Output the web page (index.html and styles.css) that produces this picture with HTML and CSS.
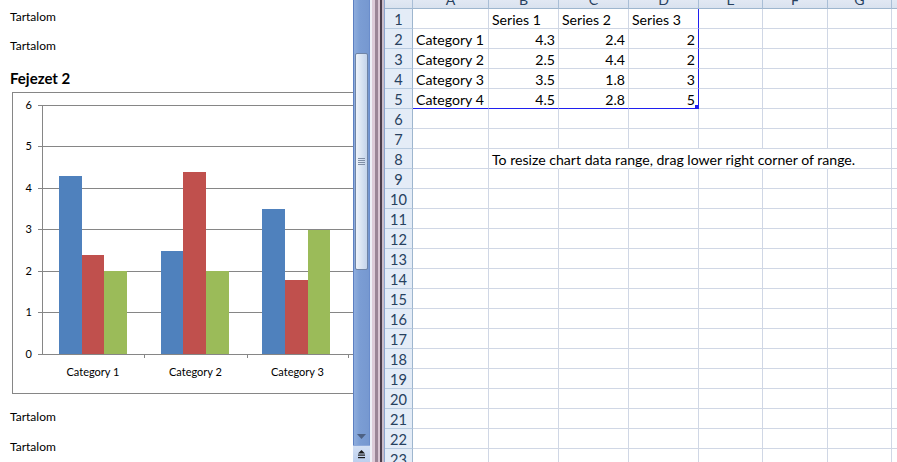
FILE: index.html
```html
<!DOCTYPE html>
<html>
<head>
<meta charset="utf-8">
<link rel="stylesheet" href="styles.css">
</head>
<body>
<div class="app">
  <div class="doc">
    <p class="para">Tartalom</p>
    <p class="para p2">Tartalom</p>
    <h2 class="heading">Fejezet 2</h2>
    <div class="chart">
      <svg class="chart-svg" width="358" height="300" viewBox="13 93 358 300" xmlns="http://www.w3.org/2000/svg">
        <g stroke="#868686" stroke-width="1" shape-rendering="crispEdges">
          <line x1="38" y1="105.5" x2="372" y2="105.5"/>
          <line x1="38" y1="146.5" x2="372" y2="146.5"/>
          <line x1="38" y1="188.5" x2="372" y2="188.5"/>
          <line x1="38" y1="229.5" x2="372" y2="229.5"/>
          <line x1="38" y1="271.5" x2="372" y2="271.5"/>
          <line x1="38" y1="312.5" x2="372" y2="312.5"/>
        </g>
        <g shape-rendering="crispEdges">
          <rect x="59" y="175.5" width="23" height="179" fill="#4f81bd"/>
          <rect x="82" y="254.5" width="22" height="100" fill="#c0504d"/>
          <rect x="104" y="271" width="23" height="83.5" fill="#9bbb59"/>
          <rect x="161" y="250.5" width="22" height="104" fill="#4f81bd"/>
          <rect x="183" y="171.5" width="23" height="183" fill="#c0504d"/>
          <rect x="206" y="271" width="23" height="83.5" fill="#9bbb59"/>
          <rect x="262" y="208.5" width="23" height="146" fill="#4f81bd"/>
          <rect x="285" y="279.5" width="23" height="75" fill="#c0504d"/>
          <rect x="308" y="229.5" width="22" height="125" fill="#9bbb59"/>
        </g>
        <g stroke="#868686" stroke-width="1" shape-rendering="crispEdges">
          <line x1="42.5" y1="105" x2="42.5" y2="355"/>
          <line x1="38" y1="354.5" x2="372" y2="354.5"/>
          <line x1="144.5" y1="354" x2="144.5" y2="358"/>
          <line x1="247.5" y1="354" x2="247.5" y2="358"/>
          <line x1="348.5" y1="354" x2="348.5" y2="358"/>
        </g>
        <g class="axis-text" text-anchor="end">
          <text x="32" y="109">6</text>
          <text x="32" y="150">5</text>
          <text x="32" y="192">4</text>
          <text x="32" y="233">3</text>
          <text x="32" y="275">2</text>
          <text x="32" y="316">1</text>
          <text x="32" y="358">0</text>
        </g>
        <g class="axis-text" text-anchor="middle">
          <text x="93" y="376">Category 1</text>
          <text x="195.5" y="376">Category 2</text>
          <text x="297.5" y="376">Category 3</text>
        </g>
      </svg>
    </div>
    <p class="para p3">Tartalom</p>
    <p class="para p4">Tartalom</p>
  </div>

  <div class="vscroll">
    <div class="track-top"></div>
    <div class="thumb"><span class="grip"></span></div>
    <div class="track-rest"></div>
    <div class="arrow-btn">
      <svg width="9" height="5" viewBox="0 0 9 5"><polygon points="0,0 9,0 4.5,5" fill="#4d6184"/></svg>
    </div>
    <div class="browse-btn">
      <svg width="9" height="9" viewBox="0 0 9 9"><polygon points="4.5,0 8,3.5 1,3.5" fill="#1a1a1a"/><rect x="1" y="4.5" width="7" height="1.2" fill="#1a1a1a"/><rect x="1" y="7" width="7" height="1.2" fill="#1a1a1a"/></svg>
    </div>
  </div>

  <div class="splitter"></div>

  <div class="sheet">
    <div class="grid">
      <div class="corner"></div><div class="ch">A</div><div class="ch">B</div><div class="ch">C</div><div class="ch">D</div><div class="ch">E</div><div class="ch">F</div><div class="ch">G</div><div class="ch">H</div>
      <div class="rh">1</div><div class="c"></div><div class="c">Series 1</div><div class="c">Series 2</div><div class="c rb">Series 3</div><div class="c"></div><div class="c"></div><div class="c"></div><div class="c"></div>
      <div class="rh">2</div><div class="c">Category 1</div><div class="c n">4.3</div><div class="c n">2.4</div><div class="c n rb">2</div><div class="c"></div><div class="c"></div><div class="c"></div><div class="c"></div>
      <div class="rh">3</div><div class="c">Category 2</div><div class="c n">2.5</div><div class="c n">4.4</div><div class="c n rb">2</div><div class="c"></div><div class="c"></div><div class="c"></div><div class="c"></div>
      <div class="rh">4</div><div class="c">Category 3</div><div class="c n">3.5</div><div class="c n">1.8</div><div class="c n rb">3</div><div class="c"></div><div class="c"></div><div class="c"></div><div class="c"></div>
      <div class="rh">5</div><div class="c bb">Category 4</div><div class="c n bb">4.5</div><div class="c n bb">2.8</div><div class="c n rb bb handle-cell">5<span class="handle"></span></div><div class="c"></div><div class="c"></div><div class="c"></div><div class="c"></div>
      <div class="rh">6</div><div class="c"></div><div class="c"></div><div class="c"></div><div class="c"></div><div class="c"></div><div class="c"></div><div class="c"></div><div class="c"></div>
      <div class="rh">7</div><div class="c"></div><div class="c"></div><div class="c"></div><div class="c"></div><div class="c"></div><div class="c"></div><div class="c"></div><div class="c"></div>
      <div class="rh">8</div><div class="c"></div><div class="c ov note">To resize chart data range, drag lower right corner of range.</div><div class="c ov"></div><div class="c ov"></div><div class="c ov"></div><div class="c ov"></div><div class="c"></div><div class="c"></div>
      <div class="rh">9</div><div class="c"></div><div class="c"></div><div class="c"></div><div class="c"></div><div class="c"></div><div class="c"></div><div class="c"></div><div class="c"></div>
      <div class="rh">10</div><div class="c"></div><div class="c"></div><div class="c"></div><div class="c"></div><div class="c"></div><div class="c"></div><div class="c"></div><div class="c"></div>
      <div class="rh">11</div><div class="c"></div><div class="c"></div><div class="c"></div><div class="c"></div><div class="c"></div><div class="c"></div><div class="c"></div><div class="c"></div>
      <div class="rh">12</div><div class="c"></div><div class="c"></div><div class="c"></div><div class="c"></div><div class="c"></div><div class="c"></div><div class="c"></div><div class="c"></div>
      <div class="rh">13</div><div class="c"></div><div class="c"></div><div class="c"></div><div class="c"></div><div class="c"></div><div class="c"></div><div class="c"></div><div class="c"></div>
      <div class="rh">14</div><div class="c"></div><div class="c"></div><div class="c"></div><div class="c"></div><div class="c"></div><div class="c"></div><div class="c"></div><div class="c"></div>
      <div class="rh">15</div><div class="c"></div><div class="c"></div><div class="c"></div><div class="c"></div><div class="c"></div><div class="c"></div><div class="c"></div><div class="c"></div>
      <div class="rh">16</div><div class="c"></div><div class="c"></div><div class="c"></div><div class="c"></div><div class="c"></div><div class="c"></div><div class="c"></div><div class="c"></div>
      <div class="rh">17</div><div class="c"></div><div class="c"></div><div class="c"></div><div class="c"></div><div class="c"></div><div class="c"></div><div class="c"></div><div class="c"></div>
      <div class="rh">18</div><div class="c"></div><div class="c"></div><div class="c"></div><div class="c"></div><div class="c"></div><div class="c"></div><div class="c"></div><div class="c"></div>
      <div class="rh">19</div><div class="c"></div><div class="c"></div><div class="c"></div><div class="c"></div><div class="c"></div><div class="c"></div><div class="c"></div><div class="c"></div>
      <div class="rh">20</div><div class="c"></div><div class="c"></div><div class="c"></div><div class="c"></div><div class="c"></div><div class="c"></div><div class="c"></div><div class="c"></div>
      <div class="rh">21</div><div class="c"></div><div class="c"></div><div class="c"></div><div class="c"></div><div class="c"></div><div class="c"></div><div class="c"></div><div class="c"></div>
      <div class="rh">22</div><div class="c"></div><div class="c"></div><div class="c"></div><div class="c"></div><div class="c"></div><div class="c"></div><div class="c"></div><div class="c"></div>
      <div class="rh">23</div><div class="c"></div><div class="c"></div><div class="c"></div><div class="c"></div><div class="c"></div><div class="c"></div><div class="c"></div><div class="c"></div>
    </div>
  </div>
</div>
</body>
</html>
```

FILE: styles.css
```css
html, body {
  margin: 0;
  padding: 0;
  width: 897px;
  height: 462px;
  overflow: hidden;
  background: #fff;
}

.app {
  display: flex;
  width: 897px;
  height: 462px;
  overflow: hidden;
}

/* ---------- Word document ---------- */
.doc {
  flex: none;
  width: 353px;
  height: 462px;
  overflow: hidden;
  box-sizing: border-box;
  padding: 9px 0 0 10px;
  background: #fff;
  font-family: Lato, "Open Sans", sans-serif;
  color: #000;
}

.para {
  margin: 0;
  font-size: 12px;
  line-height: 16px;
}

.p2 { margin-top: 13px; }

.heading {
  margin: 14px 0 0 0;
  font-size: 15px;
  line-height: 20px;
  font-weight: 700;
}

.chart {
  margin: 4px 0 0 2px;
  width: 360px;
  height: 302px;
  box-sizing: border-box;
  border: 1px solid #868686;
  background: #fff;
}

.chart-svg { display: block; }

.axis-text {
  font-family: Lato, "Open Sans", sans-serif;
  font-size: 11px;
  fill: #000;
}

.p3 { margin-top: 15px; }
.p4 { margin-top: 14px; }

/* ---------- vertical scrollbar ---------- */
.vscroll {
  flex: none;
  width: 17px;
  height: 462px;
  box-sizing: border-box;
  border-left: 1px solid #5d80c2;
  border-right: 1px solid #6a8dcc;
  display: flex;
  flex-direction: column;
  background: linear-gradient(to right, #8eaddd, #7b9dd4 40%, #7698d0);
}

.track-top { height: 53px; flex: none; }

.thumb {
  flex: none;
  height: 217px;
  margin: 0 1px;
  box-sizing: border-box;
  border: 1px solid #6f84a6;
  border-radius: 2px;
  background: linear-gradient(to right, #eef3fa, #d9e4f3 50%, #c4d4eb);
  display: flex;
  align-items: center;
  justify-content: center;
}

.grip {
  width: 7px;
  height: 7px;
  background: repeating-linear-gradient(to bottom, #7f8ea6 0 1px, transparent 1px 2px);
}

.track-rest { flex: 1; }

.arrow-btn {
  flex: none;
  height: 20px;
  display: flex;
  align-items: center;
  justify-content: center;
  padding-top: 3px;
  box-sizing: border-box;
}

.browse-btn {
  flex: none;
  height: 16px;
  background: linear-gradient(to bottom, #d3e0f4, #bccfee);
  border-top: 1px solid #8eaadb;
  display: flex;
  align-items: center;
  justify-content: center;
  margin: 0 -1px;
}

/* ---------- splitter ---------- */
.splitter {
  flex: none;
  width: 15px;
  height: 462px;
  background: linear-gradient(to right,
    #eef0f6 0 2px,
    #dccbd8 2px 5px,
    #9a8596 5px 8px,
    #d8c5d3 8px 10px,
    #4c3e4b 10px 12px,
    #c9bcc9 12px 14px,
    #8ca6cf 14px 15px);
}

/* ---------- spreadsheet ---------- */
.sheet {
  flex: 1;
  height: 462px;
  overflow: hidden;
  background: #fff;
  font-family: Lato, "Open Sans", sans-serif;
  font-size: 14.1px;
  color: #000;
}

.grid {
  display: grid;
  grid-template-columns: 28px 76px 70px 70px 70px 64px 65px 64px 64px;
  grid-auto-rows: 20px;
  margin-top: -11px;
}

.grid > div {
  box-sizing: border-box;
  line-height: 21px;
  white-space: nowrap;
}

.corner, .ch {
  background: linear-gradient(to bottom, #f3f6fb, #e1e8f3 60%, #d9e2ef);
  border-right: 1px solid #a9bed6;
  border-bottom: 1px solid #9eb6ce;
  text-align: center;
  color: #27415f;
}

.rh {
  background: #e4ecf7;
  border-right: 1px solid #9eb6ce;
  border-bottom: 1px solid #b8cbe0;
  text-align: center;
  color: #27415f;
  font-size: 14.6px;
}

.c {
  border-right: 1px solid #d0d7e5;
  border-bottom: 1px solid #d0d7e5;
  padding: 0 3px;
  overflow: visible;
}

.n { text-align: right; }

.rb { border-right: 1px solid #1f1ff0; }
.bb { border-bottom: 1px solid #1f1ff0; }

.ov { border-right-color: transparent; }

.note { overflow: visible; }

.handle-cell { position: relative; }

.handle {
  position: absolute;
  right: -1px;
  bottom: -1px;
  width: 4px;
  height: 4px;
  background: #1f1ff0;
}
```
